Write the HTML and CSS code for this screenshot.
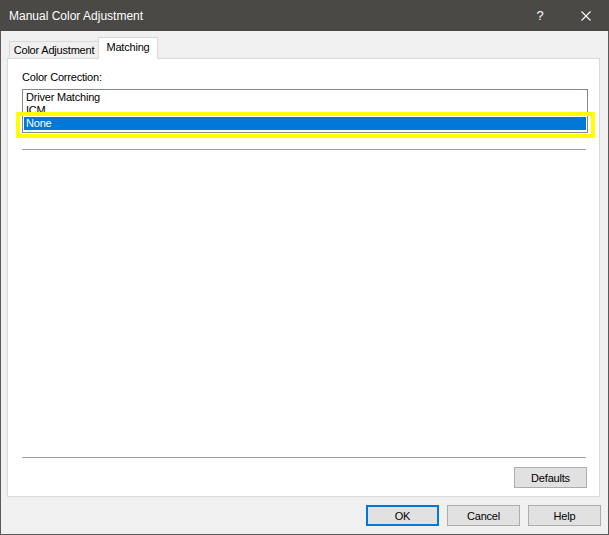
FILE: index.html
```html
<!DOCTYPE html>
<html>
<head>
<meta charset="utf-8">
<link rel="stylesheet" href="styles.css">
</head>
<body>
<div class="window">
  <div class="titlebar">
    <div class="title">Manual Color Adjustment</div>
    <div class="tb-btn help-btn">?</div>
    <div class="tb-btn close-btn">
      <svg width="10" height="10" viewBox="0 0 10 10"><path d="M0.5 0.5 L9.5 9.5 M9.5 0.5 L0.5 9.5" stroke="#ffffff" stroke-width="1.1" fill="none"/></svg>
    </div>
  </div>
  <div class="tabs">
    <div class="tab">Color Adjustment</div>
    <div class="tab selected">Matching</div>
  </div>
  <div class="panel">
    <div class="label">Color Correction:</div>
    <div class="listwrap">
      <div class="listbox">
        <div class="item">Driver Matching</div>
        <div class="item">ICM</div>
        <div class="item sel">None</div>
      </div>
      <div class="highlight"></div>
    </div>
    <div class="sep top-sep"></div>
    <div class="spacer"></div>
    <div class="sep"></div>
    <div class="btn defaults">Defaults</div>
  </div>
  <div class="buttons">
    <div class="btn default-btn">OK</div>
    <div class="btn">Cancel</div>
    <div class="btn">Help</div>
  </div>
</div>
</body>
</html>
```
FILE: styles.css
```css
html, body {
  margin: 0;
  padding: 0;
  background: #f0f0f0;
}
.window {
  width: 609px;
  height: 535px;
  box-sizing: border-box;
  border: 1px solid #5a5a5a;
  border-top: none;
  background: #f0f0f0;
  display: flex;
  flex-direction: column;
  font-family: "Liberation Sans", Arial, sans-serif;
  font-size: 11px;
  color: #000;
}
.titlebar {
  height: 31px;
  flex: none;
  background: #4a4946;
  display: flex;
  align-items: center;
  margin: 0 -1px;
  padding-left: 9px;
}
.title {
  flex: 1;
  color: #ffffff;
  font-size: 12px;
}
.tb-btn {
  width: 46px;
  height: 31px;
  display: flex;
  align-items: center;
  justify-content: center;
  color: #ffffff;
}
.help-btn {
  font-size: 13px;
}
.tabs {
  flex: none;
  margin-top: 6px;
  height: 21px;
  display: flex;
  align-items: flex-end;
  padding-left: 8px;
}
.tab {
  width: 90px;
  height: 17px;
  box-sizing: border-box;
  border: 1px solid #d9d9d9;
  border-bottom: none;
  background: #f0f0f0;
  display: flex;
  align-items: center;
  justify-content: center;
  letter-spacing: -0.2px;
}
.tab.selected {
  width: 60px;
  height: 22px;
  margin-left: -1px;
  margin-bottom: -1px;
  padding-bottom: 3px;
  background: #ffffff;
  position: relative;
  z-index: 1;
}
.panel {
  flex: none;
  margin-left: 6px;
  width: 593px;
  height: 439px;
  box-sizing: border-box;
  border: 1px solid #d9d9d9;
  background: #ffffff;
  padding: 12px 11px 8px 14px;
  display: flex;
  flex-direction: column;
}
.label {
  line-height: 13px;
  height: 13px;
  letter-spacing: -0.2px;
}
.listwrap {
  margin-top: 5px;
  position: relative;
}
.listbox {
  border: 1px solid #828790;
  padding: 1px 1px 2px 1px;
}
.item {
  height: 13px;
  line-height: 13px;
  padding-left: 2px;
  letter-spacing: -0.2px;
}
.item.sel {
  background: #0078d7;
  color: #ffffff;
}
.highlight {
  position: absolute;
  left: -6px;
  top: 23px;
  width: 579px;
  height: 26px;
  box-sizing: border-box;
  border: 4px solid #ffff00;
}
.sep {
  height: 1px;
  background: #a0a0a0;
  margin-right: 2px;
  flex: none;
}
.top-sep {
  margin-top: 16px;
}
.spacer {
  flex: 1;
}
.btn {
  width: 73px;
  height: 21px;
  box-sizing: border-box;
  border: 1px solid #adadad;
  background: #e1e1e1;
  display: flex;
  align-items: center;
  justify-content: center;
  letter-spacing: -0.2px;
}
.defaults {
  margin-top: 9px;
  align-self: flex-end;
  margin-right: 1px;
}
.default-btn {
  border: 2px solid #0078d7;
}
.buttons {
  flex: none;
  margin-top: 8px;
  display: flex;
  justify-content: flex-end;
  gap: 8px;
  padding-right: 7px;
}
```
